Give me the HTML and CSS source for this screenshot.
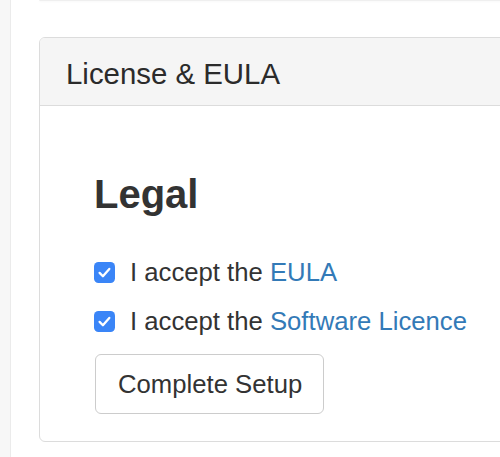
FILE: index.html
```html
<!DOCTYPE html>
<html>
<head>
<meta charset="utf-8">
<link rel="stylesheet" href="styles.css">
</head>
<body>
<div class="page">
  <div class="sidebar"></div>
  <main class="main">
    <div class="prev-card"></div>
    <section class="panel">
      <div class="panel-heading">
        <h3 class="panel-title">License &amp; EULA</h3>
      </div>
      <div class="panel-body">
        <h1 class="legal-title">Legal</h1>
        <div class="check-row">
          <span class="checkbox"><svg width="21" height="21" viewBox="0 0 21 21"><rect x="0" y="0" width="21" height="21" rx="4.5" fill="#3a85f7"/><path d="M5.6 10.9 L8.9 14.2 L15.3 6.9" fill="none" stroke="#fff" stroke-width="2.3" stroke-linecap="round" stroke-linejoin="round"/></svg></span>
          <span class="check-label">I accept the <a class="link" href="#">EULA</a></span>
        </div>
        <div class="check-row">
          <span class="checkbox"><svg width="21" height="21" viewBox="0 0 21 21"><rect x="0" y="0" width="21" height="21" rx="4.5" fill="#3a85f7"/><path d="M5.6 10.9 L8.9 14.2 L15.3 6.9" fill="none" stroke="#fff" stroke-width="2.3" stroke-linecap="round" stroke-linejoin="round"/></svg></span>
          <span class="check-label">I accept the <a class="link" href="#">Software Licence</a></span>
        </div>
        <button class="btn">Complete Setup</button>
      </div>
    </section>
  </main>
</div>
</body>
</html>
```

FILE: styles.css
```css
html, body {
  margin: 0;
  padding: 0;
  background: #fff;
  overflow: hidden;
}
body {
  font-family: "Liberation Sans", Arial, sans-serif;
  color: #333;
}
.page {
  display: flex;
  min-height: 457px;
  overflow: hidden;
}
.sidebar {
  width: 10px;
  flex: none;
  background: #f7f7f7;
  border-right: 1px solid #ebebeb;
}
.main {
  flex: 1;
  min-width: 0;
  padding-left: 28px;
  overflow: hidden;
}
.prev-card {
  height: 0;
  margin-right: -20px;
  border-bottom: 1px solid #efefef;
  box-shadow: 0 1px 2px rgba(0,0,0,0.04);
  margin-bottom: 36px;
  border-radius: 0 0 6px 6px;
}
.panel {
  margin-right: -20px;
  border: 1px solid #dcdcdc;
  border-radius: 6px;
  background: #fff;
  overflow: hidden;
}
.panel-heading {
  background: #f5f5f5;
  border-bottom: 1px solid #dcdcdc;
  padding: 19px 26px 15px;
}
.panel-title {
  margin: 0;
  font-size: 29.4px;
  font-weight: normal;
  line-height: 33px;
  color: #2b2b2b;
}
.panel-body {
  padding: 67px 54px 27px;
}
.legal-title {
  margin: 0 0 38px;
  font-size: 40px;
  line-height: 43px;
  font-weight: bold;
  color: #333;
}
.check-row {
  display: flex;
  align-items: center;
  height: 36px;
  margin-bottom: 13px;
}
.check-row + .check-row {
  margin-bottom: 15px;
}
.checkbox {
  display: flex;
  width: 21px;
  height: 21px;
  margin-right: 15px;
  flex: none;
}
.check-label {
  font-size: 25.7px;
  line-height: 36px;
  color: #333;
  white-space: nowrap;
}
.link {
  color: #337ab7;
  text-decoration: none;
}
.btn {
  display: block;
  height: 60px;
  padding: 0 21px 0 22px;
  font-family: "Liberation Sans", Arial, sans-serif;
  font-size: 25.7px;
  color: #333;
  background: #fff;
  border: 1px solid #cccccc;
  border-radius: 6px;
  margin-left: 1px;
}
```
